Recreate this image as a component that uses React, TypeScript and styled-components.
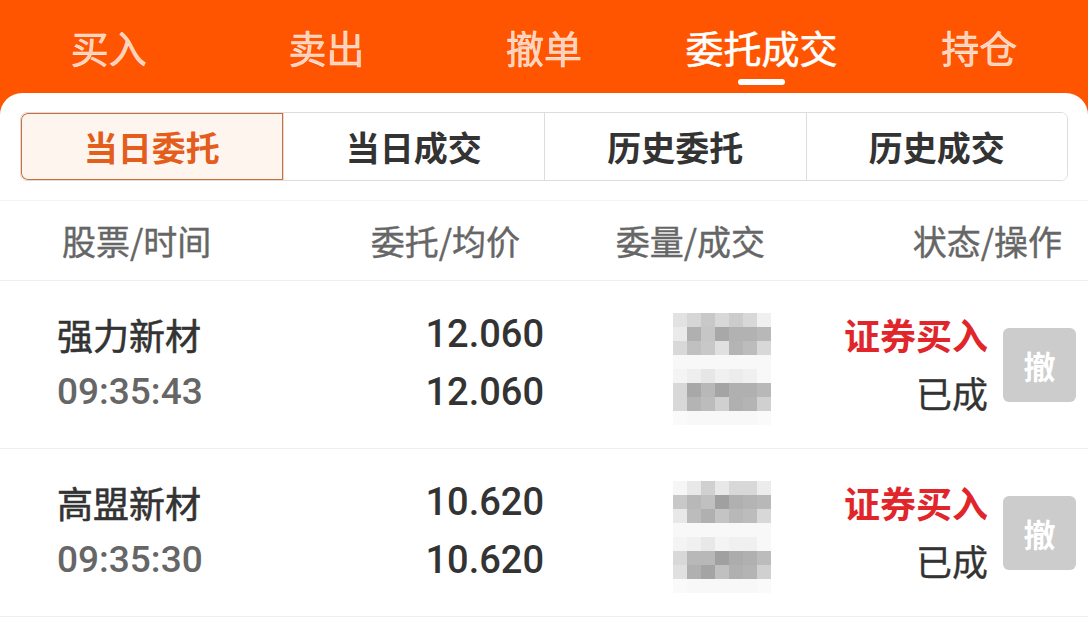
import React from "react";
import styled, { createGlobalStyle, css } from "styled-components";

const GlobalStyle = createGlobalStyle`
  html, body {
    margin: 0;
    padding: 0;
    background: #ffffff;
  }
  body {
    font-family: "Noto Sans CJK SC", "Noto Sans", sans-serif;
  }
  * { box-sizing: border-box; }
`;

const ORANGE = "#ff5500";
const CJK = `"Noto Sans CJK SC", sans-serif`;

const medium = css`
  font-family: ${CJK};
  font-weight: 400;
  -webkit-text-stroke: 0.6px currentColor;
`;

const Page = styled.div`
  width: 1088px;
  height: 640px;
  overflow: hidden;
  background: ${ORANGE};
  display: flex;
  flex-direction: column;
`;

const NavBar = styled.nav`
  height: 93px;
  flex: none;
  display: grid;
  grid-template-columns: repeat(5, 1fr);
`;

const NavItem = styled.div<{ $active?: boolean }>`
  display: flex;
  flex-direction: column;
  align-items: center;
  padding-top: 28px;
  ${medium};
  font-size: 38px;
  line-height: 38px;
  color: ${(p) => (p.$active ? "#ffffff" : "rgba(255,255,255,0.74)")};
`;

const Indicator = styled.span`
  margin-top: 13px;
  width: 47px;
  height: 6px;
  border-radius: 3px;
  background: #ffffff;
`;

const Card = styled.section`
  flex: 1;
  background: #ffffff;
  border-radius: 22px 22px 0 0;
  display: flex;
  flex-direction: column;
`;

const Segments = styled.div`
  margin: 19px 20px 0;
  height: 69px;
  display: grid;
  grid-template-columns: repeat(4, 1fr);
  border: 1px solid #dddddd;
  border-radius: 7px;
  overflow: hidden;
`;

const Segment = styled.div<{ $active?: boolean }>`
  display: flex;
  align-items: center;
  justify-content: center;
  font-family: ${CJK};
  font-size: 34px;
  font-weight: 700;
  color: ${(p) => (p.$active ? "#e35e1c" : "#333333")};
  background: ${(p) => (p.$active ? "#fff5ef" : "#ffffff")};
  border-left: 1px solid #dddddd;
  ${(p) =>
    p.$active
      ? `box-shadow: inset 0 0 0 1px #cd6e3a; border-radius: 7px 0 0 7px; border-left: none;`
      : ""}
  &:first-child { border-left: none; }
`;

const HeaderRow = styled.div`
  margin-top: 19px;
  height: 81px;
  border-top: 1px solid #f3f3f3;
  border-bottom: 1px solid #eeeeee;
  display: grid;
  grid-template-columns: 208px 250px 245px 297px;
  padding-left: 62px;
  align-items: center;
  ${medium};
  -webkit-text-stroke: 0.4px currentColor;
  font-size: 34px;
  color: #666666;
`;

const HeadCell = styled.div<{ $right?: boolean }>`
  text-align: ${(p) => (p.$right ? "right" : "left")};
  white-space: nowrap;
`;

const Row = styled.div`
  height: 168px;
  border-bottom: 1px solid #eeeeee;
  display: flex;
  align-items: center;
  padding: 0 12px 0 57px;
`;

const Stack = styled.div<{ $w?: number; $right?: boolean }>`
  display: flex;
  flex-direction: column;
  align-items: ${(p) => (p.$right ? "flex-end" : "flex-start")};
  margin-top: -4px;
  ${(p) => (p.$w ? `width: ${p.$w}px;` : "")}
`;

const NameText = styled.div`
  ${medium};
  font-size: 36px;
  line-height: 58px;
  color: #333333;
`;

const TimeText = styled.div`
  font-family: Roboto, "Noto Sans CJK SC", sans-serif;
  font-size: 37px;
  line-height: 58px;
  font-weight: 500;
  color: #666666;
`;

const PriceText = styled.div`
  font-family: Roboto, "Noto Sans CJK SC", sans-serif;
  font-size: 38px;
  line-height: 58px;
  font-weight: 500;
  color: #333333;
`;

const Mosaic = styled.svg`
  margin-left: 129px;
  align-self: flex-start;
  margin-top: 32px;
  flex: none;
  display: block;
`;

const StatusCol = styled.div`
  flex: 1;
  display: flex;
  align-items: center;
  justify-content: flex-end;
  gap: 15px;
`;

const StatusType = styled.div`
  font-family: ${CJK};
  font-size: 36px;
  line-height: 58px;
  font-weight: 700;
  color: #e0262b;
`;

const StatusState = styled.div`
  ${medium};
  -webkit-text-stroke: 0.3px currentColor;
  font-size: 36px;
  line-height: 58px;
  color: #333333;
`;

const CancelButton = styled.button`
  width: 73px;
  height: 74px;
  border: none;
  border-radius: 6px;
  background: #cccccc;
  color: #ffffff;
  font-family: ${CJK};
  font-size: 32px;
  font-weight: 700;
  padding: 0;
  display: flex;
  align-items: center;
  justify-content: center;
`;

type Order = {
  name: string;
  time: string;
  price: string;
  avg: string;
  mosaic: string[][];
};

const F = ["f8", "f8", "f8", "f8", "f8", "f8", "f8"];

const orders: Order[] = [
  {
    name: "强力新材",
    time: "09:35:43",
    price: "12.060",
    avg: "12.060",
    mosaic: [
      ["e2", "d6", "c8", "d8", "cc", "d8", "f0"],
      ["ea", "b0", "c6", "a8", "b2", "b2", "b8"],
      ["d8", "c0", "c8", "e0", "b4", "bc", "d8"],
      F,
      ["f4", "ee", "e6", "f0", "ec", "f0", "f8"],
      ["d8", "a8", "b8", "a4", "b0", "b0", "b8"],
      ["d8", "b4", "bc", "d0", "b0", "b4", "d0"],
      ["fa", "f8", "f8", "f8", "f8", "f8", "fa"],
    ],
  },
  {
    name: "高盟新材",
    time: "09:35:30",
    price: "10.620",
    avg: "10.620",
    mosaic: [
      ["f6", "e8", "d0", "e8", "d8", "d8", "ec"],
      ["c8", "b8", "c0", "a0", "b0", "b4", "b8"],
      ["e8", "bc", "b0", "c4", "b8", "bc", "d8"],
      F,
      ["f4", "f0", "e8", "f4", "f0", "f0", "f8"],
      ["d8", "b8", "b8", "a0", "ac", "b0", "bc"],
      ["e0", "b0", "a4", "c0", "b0", "b4", "d0"],
      ["fa", "f8", "f8", "f8", "f8", "f8", "fa"],
    ],
  },
];

const MosaicBlock: React.FC<{ cells: string[][] }> = ({ cells }) => (
  <Mosaic width={98} height={112} viewBox="0 0 98 112">
    {cells.map((row, r) =>
      row.map((c, i) => (
        <rect key={`${r}-${i}`} x={i * 14} y={r * 14} width={14} height={14} fill={`#${c}${c}${c}`} />
      ))
    )}
  </Mosaic>
);

const navItems = ["买入", "卖出", "撤单", "委托成交", "持仓"];
const segments = ["当日委托", "当日成交", "历史委托", "历史成交"];

export default function App() {
  return (
    <>
      <GlobalStyle />
      <Page>
        <NavBar>
          {navItems.map((t) => (
            <NavItem key={t} $active={t === "委托成交"}>
              {t}
              {t === "委托成交" && <Indicator />}
            </NavItem>
          ))}
        </NavBar>
        <Card>
          <Segments>
            {segments.map((s, i) => (
              <Segment key={s} $active={i === 0}>
                {s}
              </Segment>
            ))}
          </Segments>
          <HeaderRow>
            <HeadCell>股票/时间</HeadCell>
            <HeadCell $right>委托/均价</HeadCell>
            <HeadCell $right>委量/成交</HeadCell>
            <HeadCell $right>状态/操作</HeadCell>
          </HeaderRow>
          {orders.map((o) => (
            <Row key={o.name}>
              <Stack $w={200}>
                <NameText>{o.name}</NameText>
                <TimeText>{o.time}</TimeText>
              </Stack>
              <Stack $w={287} $right>
                <PriceText>{o.price}</PriceText>
                <PriceText>{o.avg}</PriceText>
              </Stack>
              <MosaicBlock cells={o.mosaic} />
              <StatusCol>
                <Stack $right>
                  <StatusType>证券买入</StatusType>
                  <StatusState>已成</StatusState>
                </Stack>
                <CancelButton>撤</CancelButton>
              </StatusCol>
            </Row>
          ))}
        </Card>
      </Page>
    </>
  );
}
